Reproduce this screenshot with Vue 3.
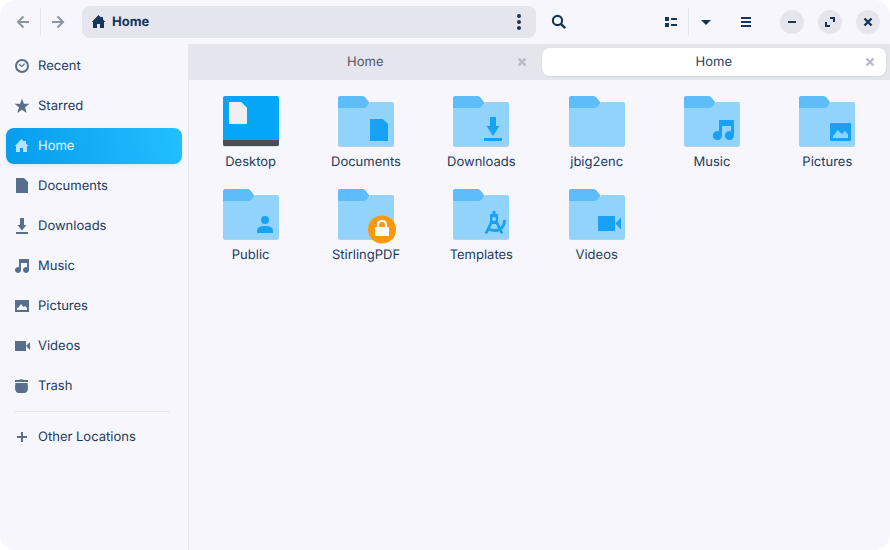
<script setup>
import { ref } from 'vue'

const places = [
  { name: 'Recent', icon: 'recent' },
  { name: 'Starred', icon: 'star' },
  { name: 'Home', icon: 'home' },
  { name: 'Documents', icon: 'document' },
  { name: 'Downloads', icon: 'download' },
  { name: 'Music', icon: 'music' },
  { name: 'Pictures', icon: 'picture' },
  { name: 'Videos', icon: 'video' },
  { name: 'Trash', icon: 'trash' },
]
const current = ref('Home')

const tabs = [
  { id: 1, title: 'Home' },
  { id: 2, title: 'Home' },
]
const activeTab = ref(2)

const files = [
  { name: 'Desktop', emblem: 'desktop' },
  { name: 'Documents', emblem: 'document' },
  { name: 'Downloads', emblem: 'download' },
  { name: 'jbig2enc', emblem: '' },
  { name: 'Music', emblem: 'music' },
  { name: 'Pictures', emblem: 'picture' },
  { name: 'Public', emblem: 'public' },
  { name: 'StirlingPDF', emblem: 'lock' },
  { name: 'Templates', emblem: 'template' },
  { name: 'Videos', emblem: 'video' },
]
</script>

<template>
  <div class="window">
    <svg class="sprite" aria-hidden="true">
      <symbol id="i-back" viewBox="0 0 16 16"><path d="M14 8H3.5M8.5 2.5 3 8l5.500 5.500" fill="none" stroke="currentColor" stroke-width="2" /></symbol>
      <symbol id="i-forward" viewBox="0 0 16 16"><path d="M2 8h10.500M7.500 2.500 13 8l-5.500 5.500" fill="none" stroke="currentColor" stroke-width="2" /></symbol>
      <symbol id="i-home" viewBox="0 0 16 16"><path d="M7.500 1 .8 8H2v6h4v-4h3v4h4V8h1.500L12 5.400V3h-2v.6z" /></symbol>
      <symbol id="i-dots" viewBox="0 0 16 16"><circle cx="8" cy="2" r="2" /><circle cx="8" cy="8" r="2" /><circle cx="8" cy="14" r="2" /></symbol>
      <symbol id="i-search" viewBox="0 0 16 16"><circle cx="6.500" cy="6.500" r="4.600" fill="none" stroke="currentColor" stroke-width="2.100" /><path d="m9.800 9.800 4.400 4.400" stroke="currentColor" stroke-width="2.400" /></symbol>
      <symbol id="i-list" viewBox="0 0 16 16"><path d="M2 3h4v4H2zm0 6h4v4H2zm6-5h6v2H8zm0 6h6v2H8z" /></symbol>
      <symbol id="i-caret" viewBox="0 0 16 16"><path d="M3 6h10l-5 5z" /></symbol>
      <symbol id="i-menu" viewBox="0 0 16 16"><path d="M3 3h10v2H3zm0 4h10v2H3zm0 4h10v2H3z" /></symbol>
      <symbol id="i-minimize" viewBox="0 0 16 16"><path d="M4 7h8v2H4z" /></symbol>
      <symbol id="i-maximize" viewBox="0 0 16 16"><path d="M8 3h5v5h-2V5H8zM3 8h2v3h3v2H3z" /></symbol>
      <symbol id="i-close" viewBox="0 0 16 16"><path d="m4.500 4.500 7 7m0-7-7 7" stroke="currentColor" stroke-width="2.400" /></symbol>
      <symbol id="i-recent" viewBox="0 0 16 16"><circle cx="8" cy="8" r="6" fill="none" stroke="currentColor" stroke-width="2" /><path d="M5.200 6.300 7.800 8.400l3-2.800" fill="none" stroke="currentColor" stroke-width="1.200" /></symbol>
      <symbol id="i-star" viewBox="0 0 16 16"><path d="m8 .5 1.900 5.300h5.600L11 9.200l1.700 5.800L8 11.700 3.300 15 5 9.200.5 5.800h5.600z" /></symbol>
      <symbol id="i-document" viewBox="0 0 16 16"><path d="M2 0h8l4 4v11H2z" /></symbol>
      <symbol id="i-download" viewBox="0 0 16 16"><path d="M6 0h4v7h2.500L8 12.500 3.500 7H6zM2 14h12v2H2z" /></symbol>
      <symbol id="i-music" viewBox="0 0 16 16"><path d="M5 1h10v11a3 3 0 1 1-2-2.800V5H7v7a3 3 0 1 1-2-2.800z" /></symbol>
      <symbol id="i-picture" viewBox="0 0 16 16"><path fill-rule="evenodd" d="M1 2h14v12H1zm2 10h10v-2l-2-2-1.500 1L7 6 5 9l-2 1z" /></symbol>
      <symbol id="i-video" viewBox="0 0 16 16"><path d="M1 3h11v10H1zM12 8l4-4v8z" /></symbol>
      <symbol id="i-trash" viewBox="0 0 16 16"><path d="M1 2h4q2.500-1.500 5 0h4v2H1zM1.500 5h12L14 9q0 6-4 6H5q-4 0-4-6z" /></symbol>
      <symbol id="i-plus" viewBox="0 0 16 16"><path d="M7 3h2v4h4v2H9v4H7V9H3V7h4z" /></symbol>

      <symbol id="f-document" viewBox="0 0 64 64"><path d="M36 30h13l5 5v17H36z" /></symbol>
      <symbol id="f-download" viewBox="0 0 64 64"><path d="M41 28h6v9h3.500L44 47l-6.500-10H41zM35 49h18v3H35z" /></symbol>
      <symbol id="f-music" viewBox="0 0 64 64"><path d="M39 31h15v15.500a4.600 4.600 0 1 1-3-4.300V37h-9v9.500a4.600 4.600 0 1 1-3-4.300z" /></symbol>
      <symbol id="f-picture" viewBox="0 0 64 64"><path fill-rule="evenodd" d="M36 34h19q1 0 1 1v16q0 1-1 1H36q-1 0-1-1V35q0-1 1-1zm2 15h15v-3.500L50 42l-3 3-4.500-4-2.500 4-2 1.500z" /></symbol>
      <symbol id="f-public" viewBox="0 0 64 64"><circle cx="46" cy="38" r="4" /><path d="M38 51v-2.500q0-4.500 8-4.500t8 4.500V51z" /></symbol>
      <symbol id="f-lock" viewBox="0 0 64 64"><circle cx="48" cy="47.500" r="14" fill="#ff9809" /><path d="M44 46v-3q0-4 4-4t4 4v3" fill="none" stroke="#fff" stroke-width="2.200" /><rect x="41" y="45" width="14" height="9" rx="1" fill="#fff" /></symbol>
      <symbol id="f-template" viewBox="0 0 64 64">
        <path fill-rule="evenodd" d="M43.500 29h3v3H48q1 0 1 1v7l-1.500 2h-5L41 40v-7q0-1 1-1h1.500zM45 35a2 2 0 1 0 0 4 2 2 0 0 0 0-4z" />
        <path d="m42.500 40-5.500 11.500M47.500 40l5.500 11.500M38.500 46.500q9 4.500 14.500-1 2.500-2.500 2.500-7.500" fill="none" stroke="currentColor" stroke-width="2.800" />
      </symbol>
      <symbol id="f-video" viewBox="0 0 64 64"><path d="M33 34h17v15H33zM50.500 41.500l5.500-6v12z" /></symbol>
    </svg>

    <header class="header">
      <div class="group">
        <button class="tool muted" aria-label="Back"><svg class="icon"><use href="#i-back" /></svg></button>
        <span class="divider"></span>
        <button class="tool muted" aria-label="Forward"><svg class="icon"><use href="#i-forward" /></svg></button>
      </div>
      <nav class="path" aria-label="Location">
        <button class="crumb"><svg class="icon"><use href="#i-home" /></svg>Home</button>
        <button class="tool" aria-label="Folder menu"><svg class="icon"><use href="#i-dots" /></svg></button>
      </nav>
      <button class="tool" aria-label="Search"><svg class="icon"><use href="#i-search" /></svg></button>
      <div class="group views">
        <button class="tool" aria-label="List view"><svg class="icon"><use href="#i-list" /></svg></button>
        <span class="divider"></span>
        <button class="tool" aria-label="View options"><svg class="icon"><use href="#i-caret" /></svg></button>
      </div>
      <button class="tool" aria-label="Main menu"><svg class="icon"><use href="#i-menu" /></svg></button>
      <div class="controls">
        <button class="round" aria-label="Minimize"><svg class="icon"><use href="#i-minimize" /></svg></button>
        <button class="round" aria-label="Maximize"><svg class="icon"><use href="#i-maximize" /></svg></button>
        <button class="round" aria-label="Close"><svg class="icon"><use href="#i-close" /></svg></button>
      </div>
    </header>

    <div class="body">
      <aside class="sidebar">
        <button
          v-for="place in places"
          :key="place.name"
          class="place"
          :class="{ selected: place.name === current }"
          @click="current = place.name"
        >
          <svg class="icon"><use :href="'#i-' + place.icon" /></svg>{{ place.name }}
        </button>
        <hr class="rule" />
        <button class="place"><svg class="icon"><use href="#i-plus" /></svg>Other Locations</button>
      </aside>

      <main class="content">
        <div class="tabs">
          <div v-for="tab in tabs" :key="tab.id" class="tab" :class="{ active: tab.id === activeTab }">
            <button class="tab-title" @click="activeTab = tab.id">{{ tab.title }}</button>
            <button class="tab-close" aria-label="Close tab"><svg class="icon"><use href="#i-close" /></svg></button>
          </div>
        </div>
        <div class="files">
          <button v-for="file in files" :key="file.name" class="file">
            <svg class="picture" viewBox="0 0 64 64" aria-hidden="true">
              <template v-if="file.emblem === 'desktop'">
                <rect x="4" y="8" width="56" height="50" rx="2" fill="#dcdce6" />
                <rect x="4" y="7" width="56" height="50" rx="2" fill="#05a6f8" />
                <path d="M4 51h56v4q0 2-2 2H6q-2 0-2-2z" fill="#4a4e52" />
                <path d="M11 13h11l6 6v15q0 1-1 1H11q-1 0-1-1V14q0-1 1-1z" fill="#f0eef2" />
                <path d="M22 13v6h6z" fill="#d5eefc" />
              </template>
              <template v-else>
                <path d="M4 20h56v36q0 2-2 2H6q-2 0-2-2z" fill="#c4c9e2" />
                <path d="M6 7h22q2 0 3 1l4 5v10H4V9q0-2 2-2z" fill="#5dbdf8" />
                <path d="M4 19h25q2 0 3-1l4-5h22q2 0 2 2v40q0 2-2 2H6q-2 0-2-2z" fill="#92d3fc" />
                <use v-if="file.emblem" :href="'#f-' + file.emblem" width="64" height="64" />
              </template>
            </svg>
            <span class="file-name">{{ file.name }}</span>
          </button>
        </div>
      </main>
    </div>
  </div>
</template>

<style>
body {
  margin: 0;
  background: #fff;
}
</style>

<style scoped>
.window {
  display: flex;
  flex-direction: column;
  min-height: 100vh;
  overflow: hidden;
  border-radius: 16px;
  background: #f7f6fc;
  color: #1b3a5f;
  font-family: Inter, "Noto Sans", sans-serif;
  font-size: 13px;
  line-height: 18px;
  text-rendering: geometricPrecision;
}
.sprite {
  position: absolute;
  width: 0;
  height: 0;
}
button {
  display: flex;
  align-items: center;
  margin: 0;
  padding: 0;
  border: 0;
  background: none;
  color: inherit;
  font: inherit;
  text-rendering: inherit;
}
.icon {
  flex: none;
  width: 16px;
  height: 16px;
  fill: currentColor;
}
.header {
  display: flex;
  align-items: center;
  height: 44px;
  padding: 0 10px 0 6px;
  color: #15355a;
}
.group {
  display: flex;
  align-items: center;
}
.tool {
  justify-content: center;
  width: 34px;
  height: 32px;
}
.muted {
  color: #8b96a5;
}
.divider {
  width: 1px;
  height: 28px;
  background: #e5e5ed;
}
.path {
  display: flex;
  flex: 1;
  align-items: center;
  justify-content: space-between;
  height: 32px;
  margin: 0 6px 0 7px;
  border-radius: 8px;
  background: #e5e5ee;
}
.crumb {
  gap: 5px;
  padding-left: 9px;
  font-weight: 700;
}
.views {
  margin: 0 6px 0 78px;
}
.controls {
  display: flex;
  gap: 14px;
  margin-left: 17px;
}
.round {
  justify-content: center;
  width: 24px;
  height: 24px;
  border-radius: 50%;
  background: #e7e5ec;
}
.body {
  display: flex;
  flex: 1;
}
.sidebar {
  flex: none;
  box-sizing: border-box;
  width: 189px;
  padding: 4px 6px;
  border-right: 1px solid #e6e6ee;
}
.place {
  gap: 8px;
  width: 100%;
  height: 36px;
  margin-bottom: 4px;
  padding: 0 8px;
  border-radius: 8px;
}
.place .icon {
  color: #566f8c;
}
.place.selected {
  background: linear-gradient(75deg, #069cec, #22c0ff);
  box-shadow: 0 2px 4px #d5e9f8;
  color: #e6f8ff;
}
.place.selected .icon {
  color: #b5e2fc;
}
.rule {
  height: 1px;
  margin: 7px 12px 7px 8px;
  border: 0;
  background: #e6e6ee;
}
.content {
  flex: 1;
  min-width: 0;
}
.tabs {
  display: flex;
  gap: 4px;
  padding: 4px;
  background: #e4e5ed;
}
.tab {
  position: relative;
  display: flex;
  flex: 1;
  height: 28px;
  border-radius: 8px;
  color: #4f5668;
}
.tab.active {
  background: #fff;
  box-shadow: 0 1px 2px #d6d9e2;
  color: #2a3f5c;
}
.tab-title {
  flex: 1;
  justify-content: center;
}
.tab-close {
  position: absolute;
  top: 6px;
  right: 8px;
  color: #b9bac6;
}
.files {
  display: grid;
  grid-template-columns: repeat(auto-fill, minmax(100px, 1fr));
  row-gap: 11px;
  padding: 9px 5px 9px 4px;
}
.file {
  flex-direction: column;
}
.picture {
  width: 64px;
  height: 64px;
  color: #17a2f3;
  fill: currentColor;
}
</style>
